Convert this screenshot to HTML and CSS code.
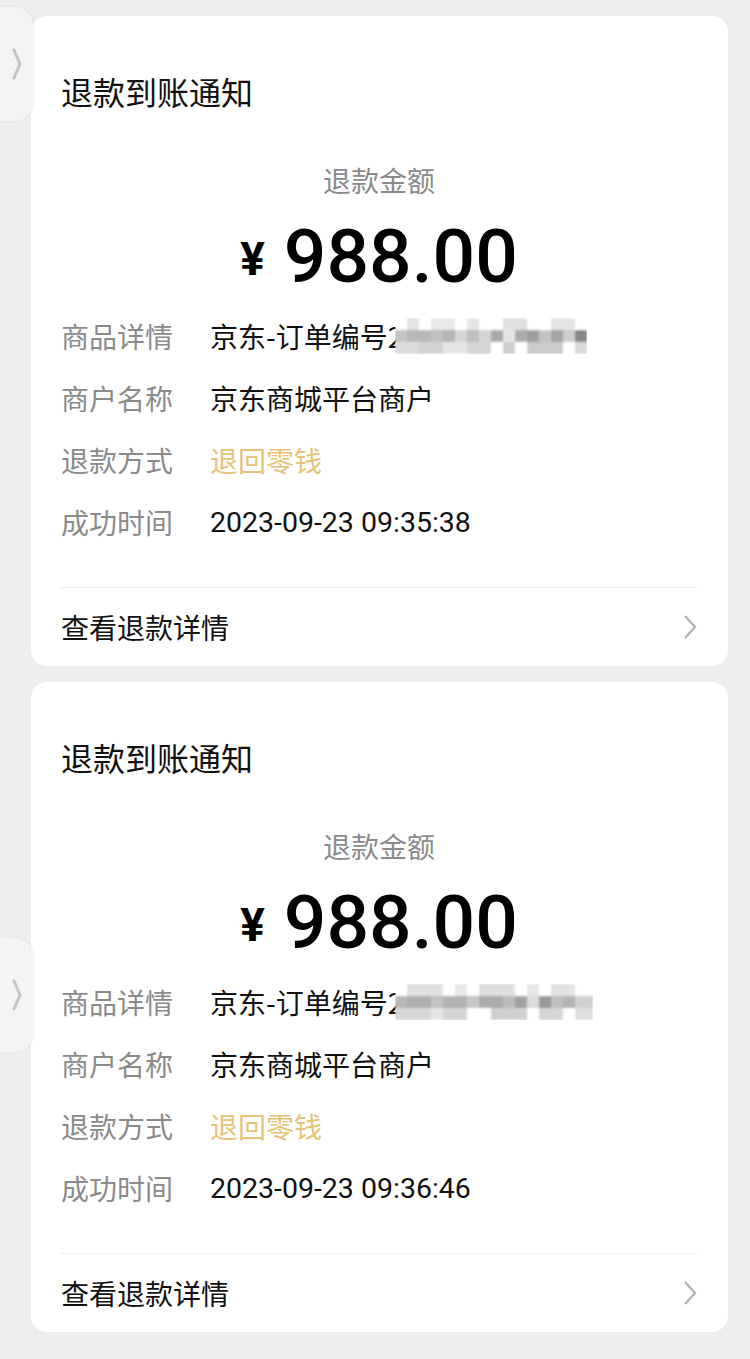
FILE: index.html
```html
<!DOCTYPE html>
<html lang="zh-CN">

<head>
    <meta charset="UTF-8">
    <meta name="viewport" content="width=device-width, initial-scale=1.0">
    <title>退款到账通知</title>
    <link rel="stylesheet" href="styles.css">
</head>

<body>
    <!-- 侧边悬浮把手 -->
    <div class="side-handle handle-top">
        <svg width="10" height="32" viewBox="0 0 10 32"><path d="M2 2 L8 16 L2 30" /></svg>
    </div>
    <div class="side-handle handle-bottom">
        <svg width="10" height="32" viewBox="0 0 10 32"><path d="M2 2 L8 16 L2 30" /></svg>
    </div>

    <div class="list">
        <div class="card">
            <div class="card-title">退款到账通知</div>
            <div class="amount-label">退款金额</div>
            <div class="amount"><span class="currency">¥</span>988.00</div>
            <div class="row">
                <span class="row-label">商品详情</span>
                <span class="row-value">京东-订单编号2<svg class="mosaic" width="192" height="36" viewBox="0 0 192 36">
                        <g filter="url(#soft1)">
                            <rect x="0" y="0" width="192" height="36" fill="#fff" />
                            <rect x="12" y="0" width="12" height="12" fill="#e2e2e2" />
                            <rect x="36" y="0" width="24" height="12" fill="#e8e8e8" />
                            <rect x="72" y="0" width="12" height="12" fill="#e4e4e4" />
                            <rect x="108" y="0" width="24" height="12" fill="#e0e0e0" />
                            <rect x="156" y="0" width="24" height="12" fill="#e4e4e4" />
                            <rect x="0" y="12" width="12" height="12" fill="#c4c4c4" />
                            <rect x="12" y="12" width="24" height="12" fill="#b8b8b8" />
                            <rect x="36" y="12" width="12" height="12" fill="#c0c0c0" />
                            <rect x="48" y="12" width="12" height="12" fill="#b4b4b4" />
                            <rect x="60" y="12" width="12" height="12" fill="#d6d6d6" />
                            <rect x="72" y="12" width="12" height="12" fill="#bebebe" />
                            <rect x="84" y="12" width="12" height="12" fill="#d4d4d4" />
                            <rect x="96" y="12" width="12" height="12" fill="#a8a8a8" />
                            <rect x="108" y="12" width="12" height="12" fill="#e4e4e4" />
                            <rect x="120" y="12" width="12" height="12" fill="#acacac" />
                            <rect x="132" y="12" width="12" height="12" fill="#a0a0a0" />
                            <rect x="144" y="12" width="12" height="12" fill="#c4c4c4" />
                            <rect x="156" y="12" width="12" height="12" fill="#a4a4a4" />
                            <rect x="168" y="12" width="12" height="12" fill="#cccccc" />
                            <rect x="180" y="12" width="12" height="12" fill="#868686" />
                            <rect x="0" y="24" width="24" height="12" fill="#dcdcdc" />
                            <rect x="24" y="24" width="24" height="12" fill="#d2d2d2" />
                            <rect x="48" y="24" width="24" height="12" fill="#e6e6e6" />
                            <rect x="72" y="24" width="24" height="12" fill="#d6d6d6" />
                            <rect x="108" y="24" width="12" height="12" fill="#cecece" />
                            <rect x="132" y="24" width="36" height="12" fill="#cbcbcb" />
                            <rect x="180" y="24" width="12" height="12" fill="#dadada" />
                        </g>
                        <defs><filter id="soft1"><feGaussianBlur stdDeviation="0.8" /></filter></defs>
                    </svg></span>
            </div>
            <div class="row">
                <span class="row-label">商户名称</span>
                <span class="row-value">京东商城平台商户</span>
            </div>
            <div class="row">
                <span class="row-label">退款方式</span>
                <span class="row-value gold">退回零钱</span>
            </div>
            <div class="row">
                <span class="row-label">成功时间</span>
                <span class="row-value time">2023-09-23 09:35:38</span>
            </div>
            <div class="card-footer">
                <span>查看退款详情</span>
                <svg class="arrow" width="14" height="26" viewBox="0 0 14 26"><path d="M2 2 L12 13 L2 24" /></svg>
            </div>
        </div>

        <div class="card">
            <div class="card-title">退款到账通知</div>
            <div class="amount-label">退款金额</div>
            <div class="amount"><span class="currency">¥</span>988.00</div>
            <div class="row">
                <span class="row-label">商品详情</span>
                <span class="row-value">京东-订单编号2<svg class="mosaic" width="198" height="36" viewBox="0 0 198 36">
                        <g filter="url(#soft2)">
                            <rect x="0" y="0" width="198" height="36" fill="#fff" />
                            <rect x="12" y="0" width="36" height="12" fill="#e0e0e0" />
                            <rect x="60" y="0" width="12" height="12" fill="#e8e8e8" />
                            <rect x="84" y="0" width="36" height="12" fill="#dedede" />
                            <rect x="132" y="0" width="12" height="12" fill="#e6e6e6" />
                            <rect x="156" y="0" width="24" height="12" fill="#e2e2e2" />
                            <rect x="0" y="12" width="12" height="12" fill="#b8b8b8" />
                            <rect x="12" y="12" width="24" height="12" fill="#b0b0b0" />
                            <rect x="36" y="12" width="12" height="12" fill="#c2c2c2" />
                            <rect x="48" y="12" width="24" height="12" fill="#b2b2b2" />
                            <rect x="72" y="12" width="12" height="12" fill="#c6c6c6" />
                            <rect x="84" y="12" width="24" height="12" fill="#acacac" />
                            <rect x="108" y="12" width="12" height="12" fill="#bcbcbc" />
                            <rect x="120" y="12" width="12" height="12" fill="#a2a2a2" />
                            <rect x="132" y="12" width="12" height="12" fill="#dcdcdc" />
                            <rect x="144" y="12" width="12" height="12" fill="#989898" />
                            <rect x="156" y="12" width="12" height="12" fill="#c0c0c0" />
                            <rect x="168" y="12" width="12" height="12" fill="#b4b4b4" />
                            <rect x="180" y="12" width="18" height="12" fill="#d0d0d0" />
                            <rect x="0" y="24" width="36" height="12" fill="#d8d8d8" />
                            <rect x="36" y="24" width="12" height="12" fill="#e6e6e6" />
                            <rect x="48" y="24" width="24" height="12" fill="#d4d4d4" />
                            <rect x="96" y="24" width="36" height="12" fill="#d0d0d0" />
                            <rect x="144" y="24" width="24" height="12" fill="#d6d6d6" />
                            <rect x="180" y="24" width="18" height="12" fill="#e0e0e0" />
                        </g>
                        <defs><filter id="soft2"><feGaussianBlur stdDeviation="0.8" /></filter></defs>
                    </svg></span>
            </div>
            <div class="row">
                <span class="row-label">商户名称</span>
                <span class="row-value">京东商城平台商户</span>
            </div>
            <div class="row">
                <span class="row-label">退款方式</span>
                <span class="row-value gold">退回零钱</span>
            </div>
            <div class="row">
                <span class="row-label">成功时间</span>
                <span class="row-value time">2023-09-23 09:36:46</span>
            </div>
            <div class="card-footer">
                <span>查看退款详情</span>
                <svg class="arrow" width="14" height="26" viewBox="0 0 14 26"><path d="M2 2 L12 13 L2 24" /></svg>
            </div>
        </div>
    </div>
</body>

</html>
```

FILE: styles.css
```css
body {
    margin: 0;
    background-color: #ededed;
    font-family: "Noto Sans CJK SC", "Noto Sans", sans-serif;
    color: #111;
}

.list {
    padding: 16px 22px 28px 31px;
    display: flex;
    flex-direction: column;
    gap: 16px;
}

.card {
    background: #fff;
    border-radius: 16px;
    padding: 53px 31px 0 30px;
}

.card-title {
    font-size: 32px;
    line-height: 44px;
    color: #111;
}

.amount-label {
    margin-top: 47px;
    font-size: 28px;
    line-height: 40px;
    color: #8a8a8a;
    text-align: center;
}

.amount {
    margin-top: 10px;
    font-family: Roboto, "Liberation Sans", sans-serif;
    font-size: 75px;
    font-weight: 500;
    line-height: 92px;
    text-align: center;
    color: #000;
}

.currency {
    font-size: 46px;
    font-weight: 700;
    margin-right: 19px;
    vertical-align: 7px;
}

.row {
    display: flex;
    align-items: center;
    height: 62px;
    font-size: 28px;
}

.row-label {
    width: 149px;
    flex-shrink: 0;
    color: #8a8a8a;
}

.row-value {
    display: flex;
    align-items: center;
    color: #111;
}

.row-value.gold {
    color: #e5c47a;
}

.row-value.time {
    font-family: Roboto, "Liberation Sans", sans-serif;
    font-size: 28.5px;
}

.mosaic {
    margin-left: -8px;
}

.card-footer {
    margin-top: 34px;
    border-top: 1px solid #ededed;
    height: 78px;
    display: flex;
    align-items: center;
    justify-content: space-between;
    font-size: 28px;
    color: #111;
}

.arrow path {
    fill: none;
    stroke: #b5b5b5;
    stroke-width: 2.4;
}

.side-handle {
    position: absolute;
    left: 0;
    width: 33px;
    height: 114px;
    background: #f3f3f3;
    border-radius: 0 18px 18px 0;
    box-shadow: 1px 0 3px rgba(0, 0, 0, 0.06);
    display: flex;
    align-items: center;
    justify-content: center;
}

.handle-top {
    top: 7px;
}

.handle-bottom {
    top: 938px;
}

.side-handle path {
    fill: none;
    stroke: #c4c4c4;
    stroke-width: 3;
    stroke-linecap: round;
}
```
